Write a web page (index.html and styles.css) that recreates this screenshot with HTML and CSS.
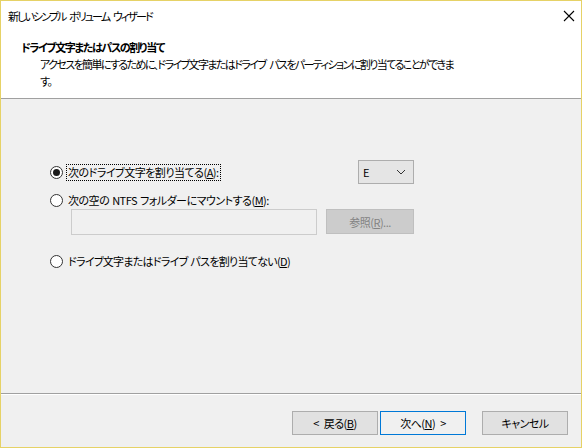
FILE: index.html
```html
<!DOCTYPE html>
<html lang="ja">
<head>
    <meta charset="UTF-8">
    <title>新しいシンプル ボリューム ウィザード</title>
    <link rel="stylesheet" href="styles.css">
</head>
<body>
    <div class="window">
        <div class="titlebar">
            <span class="title">新しいシンプル ボリューム ウィザード</span>
            <svg class="close" width="12" height="12" viewBox="0 0 12 12">
                <path d="M1 1 L11 11 M11 1 L1 11" stroke="#000" stroke-width="1.1" fill="none"/>
            </svg>
        </div>
        <div class="header">
            <div class="heading">ドライブ文字またはパスの割り当て</div>
            <div class="desc">アクセスを簡単にするために、ドライブ文字またはドライブ パスをパーティションに割り当てることができます。</div>
        </div>
        <div class="content">
            <div class="options">
                <div class="row row-first">
                    <label class="radio">
                        <span class="dot checked"></span>
                        <span class="label focused">次のドライブ文字を割り当てる(<u>A</u>):</span>
                    </label>
                    <div class="select">
                        <span>E</span>
                        <svg width="10" height="6" viewBox="0 0 10 6">
                            <path d="M1 1 L5 5 L9 1" stroke="#333" stroke-width="1" fill="none"/>
                        </svg>
                    </div>
                </div>
                <label class="radio row-second">
                    <span class="dot"></span>
                    <span class="label">次の空の NTFS フォルダーにマウントする(<u>M</u>):</span>
                </label>
                <div class="row row-path">
                    <div class="textbox"></div>
                    <div class="btn disabled">参照(<u>R</u>)...</div>
                </div>
                <label class="radio row-third">
                    <span class="dot"></span>
                    <span class="label">ドライブ文字またはドライブ パスを割り当てない(<u>D</u>)</span>
                </label>
            </div>
        </div>
        <div class="footer">
            <div class="btn">&lt; 戻る(<u>B</u>)</div>
            <div class="btn default">次へ(<u>N</u>) &gt;</div>
            <div class="btn cancel">キャンセル</div>
        </div>
    </div>
</body>
</html>
```

FILE: styles.css
```css
* {
    box-sizing: border-box;
}

body {
    margin: 0;
    font-family: "Noto Sans CJK JP", "Noto Sans", sans-serif;
    font-size: 11px;
    letter-spacing: -0.5px;
    word-spacing: 1px;
    font-feature-settings: "palt";
    color: #000;
    background: #fff;
}

.window {
    width: 582px;
    height: 448px;
    border: 1px solid #e6d266;
    display: flex;
    flex-direction: column;
    background: #f0f0f0;
}

.titlebar {
    height: 29px;
    background: #fff;
    display: flex;
    align-items: center;
    justify-content: space-between;
    padding: 0 6px 0 7px;
}

.title {
    letter-spacing: -1.9px;
    word-spacing: 3px;
}

.header {
    height: 69px;
    background: #fff;
    border-bottom: 1px solid #a0a0a0;
    padding: 9px 0 0 20px;
    line-height: 17px;
}

.heading {
    font-weight: bold;
    letter-spacing: -1.4px;
}

.desc {
    margin-left: 19px;
    width: 418px;
    letter-spacing: -1.6px;
    word-spacing: 3px;
}

.content {
    flex: 1;
    padding: 61px 0 0 49px;
}

.options {
    width: 364px;
}

.row {
    display: flex;
    justify-content: space-between;
    align-items: center;
}

.row-first {
    height: 24px;
}

.radio {
    display: flex;
    align-items: center;
    height: 17px;
}

.row-second {
    margin-top: 8px;
}

.row-third {
    margin-top: 18px;
    letter-spacing: -0.7px;
}

.dot {
    width: 13px;
    height: 13px;
    border: 1px solid #333;
    border-radius: 50%;
    background: #fff;
    position: relative;
    margin-right: 3px;
}

.dot.checked::after {
    content: "";
    position: absolute;
    left: 2px;
    top: 2px;
    width: 7px;
    height: 7px;
    border-radius: 50%;
    background: #1a1a1a;
}

.label {
    padding: 0 1px;
    line-height: 15px;
    border: 1px solid transparent;
}

.label.focused {
    border: 1px dotted #000;
}

.select {
    width: 56px;
    height: 24px;
    border: 1px solid #adadad;
    background: #e5e5e5;
    display: flex;
    align-items: center;
    justify-content: space-between;
    padding: 0 7px 0 4px;
}

.row-path {
    padding-left: 21px;
    align-items: flex-start;
}

.textbox {
    width: 246px;
    height: 26px;
    border: 1px solid #cccccc;
    background: #f0f0f0;
}

.btn {
    width: 86px;
    height: 24px;
    border: 1px solid #adadad;
    background: #e1e1e1;
    display: flex;
    align-items: center;
    justify-content: center;
    word-spacing: 3px;
}

.btn.disabled {
    width: 88px;
    height: 25px;
    border-color: #bfbfbf;
    background: #cccccc;
    color: #838383;
}

.btn.default {
    border: 1px solid #0078d7;
    background: #f0f0f0;
    margin-left: 2px;
}

.btn.cancel {
    margin-left: 16px;
}

.footer {
    height: 54px;
    border-top: 1px solid #a0a0a0;
    box-shadow: inset 0 1px 0 #fff;
    display: flex;
    justify-content: flex-end;
    padding: 17px 13px 0 0;
}
```
